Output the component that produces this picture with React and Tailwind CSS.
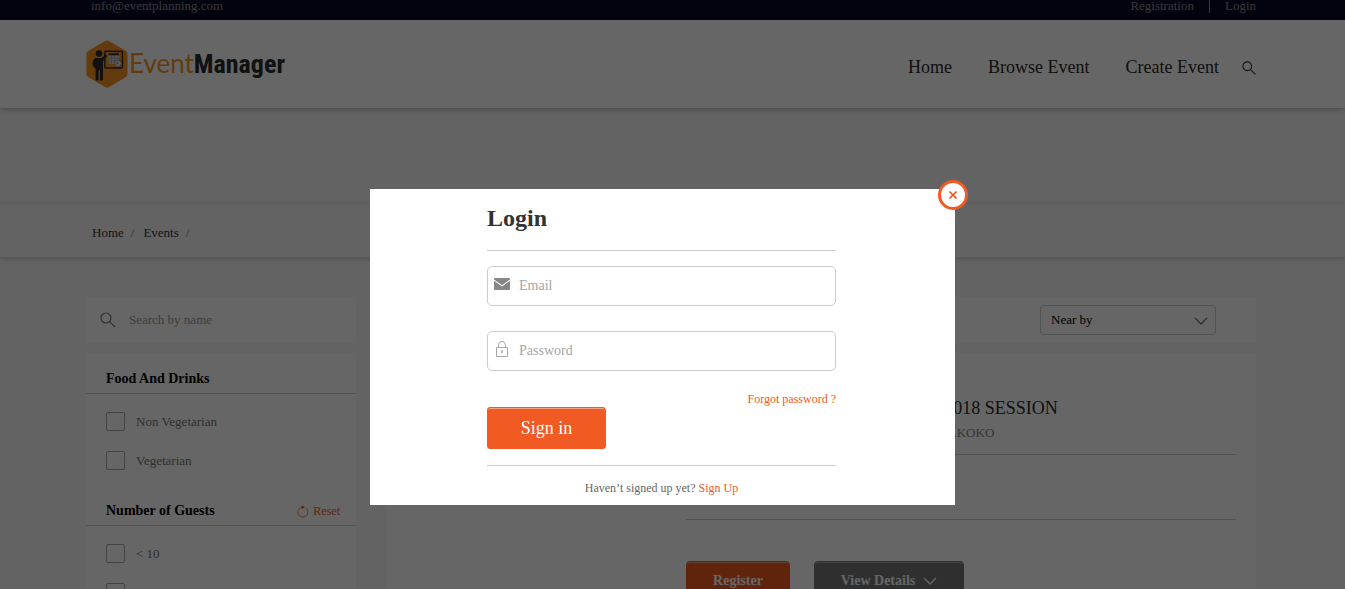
import React from "react";

function SearchIcon({ className }) {
  return (
    <svg viewBox="0 0 16 16" className={className} fill="none" stroke="currentColor" strokeWidth="1.2" aria-hidden="true">
      <circle cx="6" cy="6" r="5" />
      <path d="M9.6 9.6 15.2 15.2" />
    </svg>
  );
}

function ChevronIcon({ className }) {
  return (
    <svg viewBox="0 0 14 8" className={className} fill="none" stroke="currentColor" strokeWidth="1.3" aria-hidden="true">
      <path d="M1 1 7 7 13 1" />
    </svg>
  );
}

function ResetIcon() {
  return (
    <svg viewBox="0 0 12 13" className="h-[13px] w-3" fill="none" stroke="currentColor" strokeWidth="0.7" aria-hidden="true">
      <path d="M8.600 3A5 5 0 1 1 5 2.200" />
      <path d="M4.600 0 8 2.200 4.600 4Z" fill="currentColor" stroke="none" />
    </svg>
  );
}

function MailIcon() {
  return (
    <svg viewBox="0 0 16 12" className="h-3 w-4" aria-hidden="true">
      <path fill="#868686" d="M.8 0H15.2Q16 0 16 .8V1.400L8 7.200 0 1.400V.8Q0 0 .8 0ZM0 2.800 8 8.600 16 2.800V11Q16 12 15 12H1Q0 12 0 11Z" />
    </svg>
  );
}

function LockIcon() {
  return (
    <svg viewBox="0 0 12 16" className="mx-0.5 h-4 w-3" fill="none" stroke="#a6a6a6" aria-hidden="true">
      <path d="M.5 6.5H11.5V15.5H.5Z" />
      <path d="M2.5 6.5V4.2A3.5 3.7 0 0 1 9.5 4.2V6.5" />
      <path d="M6 9.3V12" strokeWidth="1.6" />
    </svg>
  );
}

function Logo() {
  return (
    <a href="#home" aria-label="EventManager" className="flex items-center gap-px whitespace-nowrap">
      <svg viewBox="0 0 42 48" className="h-12 w-[42px]" aria-hidden="true">
        <path fill="#f7941e" d="M19 1.1Q21 0 23 1.1L40 11Q41.500 12 41.500 14V34Q41.500 36 40 37L23 46.900Q21 48 19 46.900L2 37Q.5 36 .5 34V14Q.5 12 2 11Z" />
        <rect x="18.800" y="11.200" width="17.600" height="16.800" rx="1" fill="none" stroke="#2b2b2b" strokeWidth="1.400" />
        <rect x="22.500" y="13.500" width="10.500" height="10.500" fill="#cfcfcf" />
        <rect x="22.500" y="13.300" width="10.500" height="2" fill="#2b2b2b" />
        <path d="M25.500 15V24M28.700 15V24M22.500 18.200H33M22.500 21H33" stroke="#8d8d8d" strokeWidth=".5" />
        <circle cx="32" cy="23.500" r="3.300" fill="#e6e6e6" stroke="#777" strokeWidth=".6" />
        <path d="M32 21.500V23.700H30.300" fill="none" stroke="#555" strokeWidth=".6" />
        <circle cx="13" cy="13.500" r="3.300" fill="#2b2b2b" />
        <path fill="#2b2b2b" d="M9.500 18H15.500L19.600 14.400 21 15.900 17 21.200V39.500Q17 40.500 15.800 40.500H14V30H12.700V40.500H10.500Q9.600 40.500 9.600 39.500V29L6.700 25.500Q6.200 19.500 9.500 18Z" />
      </svg>
      <span className="text-[26px] leading-8">
        <span className="font-[Lato] text-[#f7941e]">Event</span>
        <span className="font-['Roboto_Condensed','Open_Sans_Condensed','Roboto',sans-serif] font-bold text-[#2b2b2b]">Manager</span>
      </span>
    </a>
  );
}

function Check({ label }) {
  return (
    <label className="flex h-[19px] items-center gap-[11px] text-[#777]">
      <input type="checkbox" className="size-[19px] appearance-none rounded-xs border border-[#aaa] checked:bg-[#f15a22]" />
      {label}
    </label>
  );
}

function FilterGroup({ title, resettable, options }) {
  return (
    <section>
      <div className="flex h-[41px] items-center justify-between border-b border-[#ccc] pt-3 pr-4 pl-5">
        <h2 className="text-sm font-bold text-black">{title}</h2>
        {resettable && (
          <button type="button" className="flex items-center gap-1 text-xs text-[#f15a22]">
            <ResetIcon />
            Reset
          </button>
        )}
      </div>
      <div className="flex flex-col gap-5 px-5 pt-[18px] pb-[15px]">
        {options.map((o) => (
          <Check key={o} label={o} />
        ))}
      </div>
    </section>
  );
}

function Page() {
  return (
    <div className="h-screen overflow-hidden bg-[#f8f8f8] pr-[3px]">
      <div className="-mr-[3px] bg-[#080826] pr-[3px] text-[#8b8b8b]">
        <div className="mx-auto flex h-5 max-w-[1170px] justify-between pr-0 pl-[5px] leading-3">
          <a href="mailto:info@eventplanning.com">info@eventplanning.com</a>
          <div className="flex h-[13px]">
            <a href="#registration" className="border-r border-[#8b8b8b] pr-[15px]">Registration</a>
            <a href="#login" className="pl-[15px]">Login</a>
          </div>
        </div>
      </div>

      <header className="relative -mr-[3px] bg-white pr-[3px] shadow-[0_1px_5px_rgba(0,0,0,0.3)]">
        <div className="mx-auto flex h-[88px] max-w-[1170px] items-center justify-between">
          <Logo />
          <nav className="flex items-center gap-9 pt-1.5 text-lg text-[#2b2b2b]">
            <a href="#home">Home</a>
            <a href="#browse">Browse Event</a>
            <div className="flex items-center gap-[23px]">
              <a href="#create">Create Event</a>
              <button type="button" aria-label="Search">
                <SearchIcon className="mt-0.5 size-[14px]" />
              </button>
            </div>
          </nav>
        </div>
      </header>

      <div className="h-[95px]" />

      <nav aria-label="Breadcrumb" className="-mr-[3px] border-t border-[#eee] border-b border-b-[#e2e2e2] pr-[3px] shadow-[0_1px_4px_rgba(0,0,0,0.18)]">
        <div className="mx-auto flex h-[53px] max-w-[1170px] items-center pt-[5px] pl-1.5 text-[#333]">
          <a href="#home">Home</a>
          <span className="pr-[9px] pl-[7px] text-[#888]">/</span>
          <a href="#events">Events</a>
          <span className="pl-[7px] text-[#888]">/</span>
        </div>
      </nav>

      <main className="mx-auto flex max-w-[1170px] gap-[30px] pt-[39px]">
        <aside className="flex w-[270px] shrink-0 flex-col gap-2.5">
          <label className="flex h-[46px] items-center gap-[13px] bg-white px-[14px]">
            <SearchIcon className="size-4 text-[#777]" />
            <input type="text" aria-label="Search by name" placeholder="Search by name" className="min-w-0 flex-1 bg-transparent outline-none placeholder:text-[#999]" />
          </label>
          <div className="bg-white">
            <FilterGroup title="Food And Drinks" options={["Non Vegetarian", "Vegetarian"]} />
            <FilterGroup title="Number of Guests" resettable options={["< 10", "10 - 100", "100 - 500"]} />
          </div>
        </aside>

        <div className="flex min-w-0 flex-1 flex-col gap-2.5">
          <div className="flex h-[46px] items-center justify-end bg-white pr-10">
            <div className="relative w-44">
              <select aria-label="Sort by" className="h-[30px] w-full appearance-none rounded-sm border border-[#ccc] bg-transparent px-2.5 text-black">
                <option>Near by</option>
                <option>Newest</option>
              </select>
              <ChevronIcon className="pointer-events-none absolute top-3 right-2 h-2 w-[14px] text-[#777]" />
            </div>
          </div>
          <article className="bg-white pt-[41px] pr-5 pb-8 pl-[300px]">
            <div className="border-b border-[#ccc] pb-2.5 whitespace-nowrap">
              <h2 className="text-lg leading-7 text-[#2b2b2b]">MATRICULATION CEREMONY, 2018 SESSION</h2>
              <p className="leading-[22px] text-[#888]">ADEKUNLE AJASIN UNIVERSITY CAMPUS, AKOKO</p>
            </div>
            <div className="h-[65px] border-b border-[#ccc]" />
            <div className="flex gap-6 pt-[41px] text-sm font-bold text-white">
              <button type="button" className="h-10 w-[104px] rounded-sm border border-[#f15a22] bg-[#f15a22] shadow-[inset_0_1px_0_#f7a27f]">Register</button>
              <button type="button" className="flex h-10 w-[150px] items-center justify-center gap-2 rounded-sm border border-[#777] bg-[#777] shadow-[inset_0_1px_0_#aaa]">
                View Details
                <ChevronIcon className="h-2 w-[14px]" />
              </button>
            </div>
          </article>
        </div>
      </main>
    </div>
  );
}

function Field({ icon, label, type }) {
  return (
    <label className="flex h-10 items-center gap-[9px] rounded-[5px] border border-[#ccc] px-1.5">
      <span className="pb-1">{icon}</span>
      <input type={type} aria-label={label} placeholder={label} className="min-w-0 flex-1 bg-transparent text-sm outline-none placeholder:text-[#a5a5a5]" />
    </label>
  );
}

function LoginDialog() {
  return (
    <div className="fixed inset-0 flex items-start justify-center bg-black/60 pt-[189px] pr-5">
      <div role="dialog" aria-modal="true" aria-labelledby="login-title" className="relative w-[585px] bg-white pr-[119px] pl-[117px] text-[#666]">
        <button type="button" aria-label="Close" className="absolute -top-[9px] -right-[13px] flex size-[30px] items-center justify-center rounded-full border-3 border-[#f15a22] bg-white text-[#f15a22]">
          <svg viewBox="0 0 8 8" className="mb-px size-2" stroke="currentColor" strokeWidth="1.6" aria-hidden="true">
            <path d="M.5.5 7.500 7.500M7.500.5.5 7.500" />
          </svg>
        </button>
        <h1 id="login-title" className="border-b border-[#ccc] pt-[13px] pb-4 text-2xl font-bold text-[#333]">Login</h1>
        <form className="pt-[15px]" onSubmit={(e) => e.preventDefault()}>
          <div className="flex flex-col gap-[25px]">
            <Field icon={<MailIcon />} label="Email" type="email" />
            <Field icon={<LockIcon />} label="Password" type="password" />
          </div>
          <div className="flex justify-end pt-5 text-xs text-[#f15a22]">
            <a href="#forgot">Forgot password ?</a>
          </div>
          <button type="submit" className="h-[42px] w-[119px] rounded-[3px] border border-[#f15a22] bg-[#f15a22] text-lg text-white shadow-[inset_0_1px_0_#f7a27f]">Sign in</button>
        </form>
        <p className="mt-4 border-t border-[#ccc] pt-[14px] pb-[9px] text-center text-xs">
          Haven’t signed up yet? <a href="#signup" className="text-[#f15a22]">Sign Up</a>
        </p>
      </div>
    </div>
  );
}

export default function App() {
  return (
    <div className="font-['Liberation_Serif',serif] text-[13px]">
      <Page />
      <LoginDialog />
    </div>
  );
}
